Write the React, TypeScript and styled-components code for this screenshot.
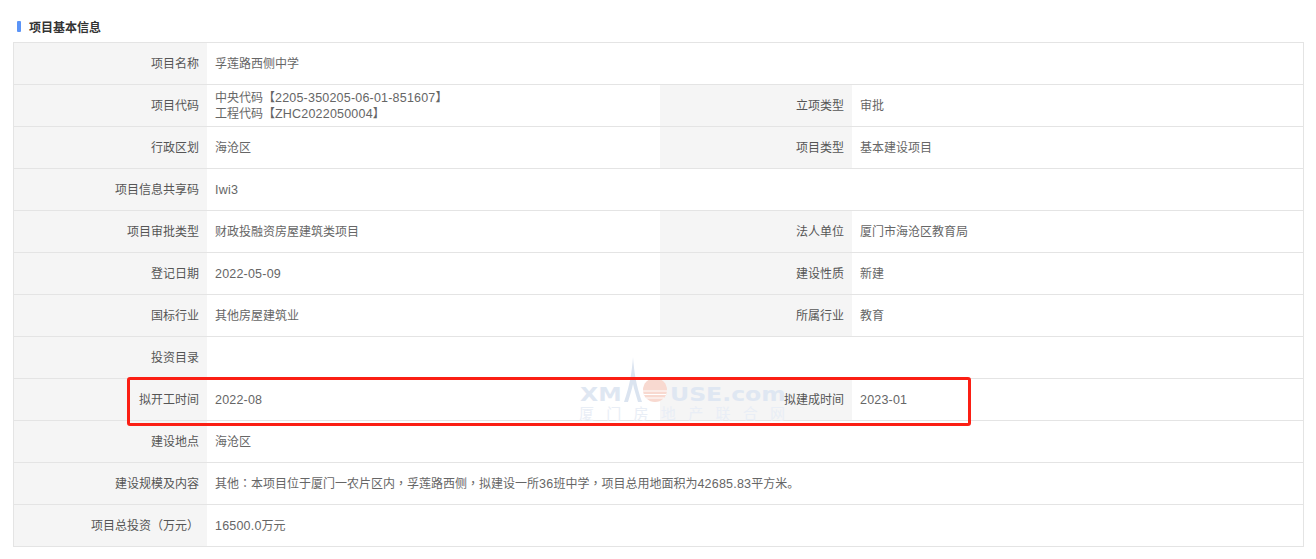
import { Fragment, type ReactNode } from "react";
import styled, { createGlobalStyle } from "styled-components";

const GlobalStyle = createGlobalStyle`
  html, body {
    margin: 0;
    padding: 0;
    background: #fff;
  }
`;

const Page = styled.div`
  position: relative;
  width: 1316px;
  height: 559px;
  overflow: hidden;
  padding: 16px 12px 0 13px;
  box-sizing: border-box;
  font-family: "Liberation Sans", "Noto Sans CJK SC", sans-serif;
  font-size: 12px;
  color: #666;
`;

const Title = styled.h2`
  display: flex;
  align-items: center;
  height: 20px;
  margin: 0 0 6px;
  padding-left: 4px;
  font-size: 12px;
  font-weight: bold;
  color: #333;
`;

const TitleMark = styled.i`
  width: 4px;
  height: 11px;
  margin-right: 8px;
  border-radius: 1px;
  background: #5b94f7;
`;

const Table = styled.div`
  border-top: 1px solid #e4e4e4;
  border-left: 1px solid #e4e4e4;
  border-right: 1px solid #e4e4e4;
`;

const Row = styled.div`
  display: grid;
  grid-template-columns: 193px 453px 192px 1fr;
  height: 41px;
  border-bottom: 1px solid #e4e4e4;
`;

const Label = styled.div`
  display: flex;
  align-items: center;
  justify-content: flex-end;
  padding-right: 8px;
  line-height: 16px;
  background: #f5f5f5;
  color: #555;
`;

const Value = styled.div<{ $span?: boolean }>`
  display: flex;
  flex-direction: column;
  justify-content: center;
  padding-left: 8px;
  line-height: 16px;
  ${(p) => (p.$span ? "grid-column: 2 / 5;" : "")}
`;

const Latin = styled.span`
  font-size: 12.5px;
  letter-spacing: 0.2px;
  line-height: 1;
`;

const Punct = styled.span`
  font-family: "Noto Sans CJK TC", sans-serif;
  line-height: 1;
`;

const Highlight = styled.div`
  position: absolute;
  left: 127px;
  top: 377px;
  width: 844px;
  height: 49px;
  box-sizing: border-box;
  border: 3px solid #fb1f14;
  border-radius: 3px;
`;

const Watermark = styled.div`
  position: absolute;
  left: 579px;
  top: 355px;
  width: 206px;
  height: 68px;
  pointer-events: none;
`;

const WaterWord = styled.span<{ $left: number }>`
  position: absolute;
  left: ${(p) => p.$left}px;
  top: 28px;
  font-family: "DejaVu Sans", sans-serif;
  font-size: 19px;
  font-weight: bold;
  line-height: 22px;
  color: #dfe7f2;
  white-space: nowrap;
  transform: scaleX(1.24);
  transform-origin: left center;
`;

const WaterCn = styled.div`
  position: absolute;
  left: 0;
  top: 50px;
  width: 206px;
  display: flex;
  justify-content: space-between;
  font-size: 15px;
  line-height: 18px;
  color: #e9eef6;
`;

const WaterLogo = styled.svg`
  position: absolute;
  left: 44px;
  top: 0;
`;

// Latin runs and the centred full-width marks use other faces than the CJK text
const mixed = (text: string): ReactNode =>
  text.split(/([A-Za-z0-9.\-]+|[，：（）])/).map((part, i) => {
    if (!part) return null;
    if (/^[，：（）]$/.test(part)) return <Punct key={i}>{part}</Punct>;
    if (/^[A-Za-z0-9.\-]+$/.test(part)) return <Latin key={i}>{part}</Latin>;
    return <Fragment key={i}>{part}</Fragment>;
  });

const rows: [string, string[], string?, string?][] = [
  ["项目名称", ["孚莲路西侧中学"]],
  ["项目代码", ["中央代码【2205-350205-06-01-851607】", "工程代码【ZHC2022050004】"], "立项类型", "审批"],
  ["行政区划", ["海沧区"], "项目类型", "基本建设项目"],
  ["项目信息共享码", ["Iwi3"]],
  ["项目审批类型", ["财政投融资房屋建筑类项目"], "法人单位", "厦门市海沧区教育局"],
  ["登记日期", ["2022-05-09"], "建设性质", "新建"],
  ["国标行业", ["其他房屋建筑业"], "所属行业", "教育"],
  ["投资目录", []],
  ["拟开工时间", ["2022-08"], "拟建成时间", "2023-01"],
  ["建设地点", ["海沧区"]],
  ["建设规模及内容", ["其他：本项目位于厦门一农片区内，孚莲路西侧，拟建设一所36班中学，项目总用地面积为42685.83平方米。"]],
  ["项目总投资（万元）", ["16500.0万元"]],
];

export default function App() {
  return (
    <Page>
      <GlobalStyle />
      <Title>
        <TitleMark />
        项目基本信息
      </Title>
      <Table>
        {rows.map(([l1, v1, l2, v2]) => (
          <Row key={l1}>
            <Label>
              <span>{mixed(l1)}</span>
            </Label>
            <Value $span={!l2}>
              {v1.map((line) => (
                <span key={line}>{mixed(line)}</span>
              ))}
            </Value>
            {l2 && <Label>{l2}</Label>}
            {l2 && (
              <Value>
                <span>{mixed(v2 ?? "")}</span>
              </Value>
            )}
          </Row>
        ))}
      </Table>
      <Watermark>
        <WaterLogo width="46" height="50" viewBox="0 0 46 50">
          <path
            d="M10 2 C11 16 13 30 19 47 L15 47 C13 40 11 34 10 29 C9 34 7 40 5 47 L1 47 C7 30 9 16 10 2 Z"
            fill="#dbe4f0"
          />
          <circle cx="32" cy="35" r="12" fill="#f8d9d0" />
          <path d="M20 36 H44 M21 39.5 H43 M23 43 H41" stroke="#fff" strokeWidth="1" />
        </WaterLogo>
        <WaterWord $left={1}>XM</WaterWord>
        <WaterWord $left={91}>USE.com</WaterWord>
        <WaterCn>
          {"厦门房地产联合网".split("").map((c) => (
            <span key={c}>{c}</span>
          ))}
        </WaterCn>
      </Watermark>
      <Highlight />
    </Page>
  );
}
